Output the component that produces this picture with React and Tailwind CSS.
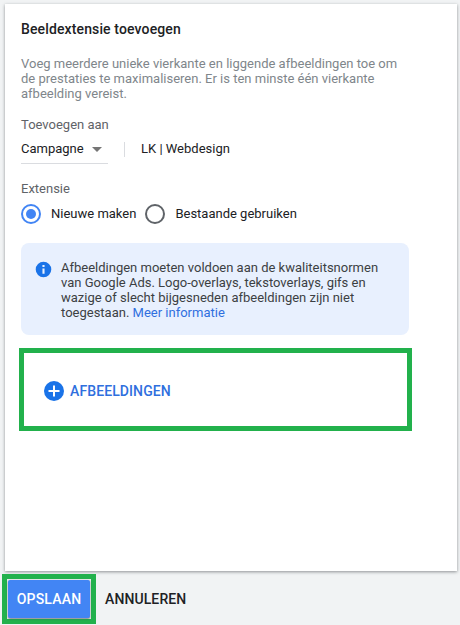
import React from "react";

function Radio({ checked, label }) {
  return (
    <div className="flex items-center">
      <span className={`flex h-[20px] w-[20px] items-center justify-center rounded-full border-2 ${checked ? "border-[#4285f4]" : "border-[#5f6368]"}`}>
        {checked && <span className="h-[10px] w-[10px] rounded-full bg-[#4285f4]" />}
      </span>
      <span className="ml-[10px] text-[13px] leading-[20px] text-[#202124]">{label}</span>
    </div>
  );
}

export default function App() {
  return (
    <div className="flex h-[625px] w-[460px] flex-col overflow-hidden bg-[#f1f3f4] font-['Roboto',sans-serif]">
      {/* Card */}
      <div className="mt-[4px] ml-[5px] flex h-[567px] w-[452px] shrink-0 flex-col bg-white pt-[17px] pl-[16px] shadow-[0_1px_3px_rgba(60,64,67,0.55)]">
        <h1 className="text-[14px] leading-[16px] font-medium tracking-[0.13px] text-[#202124]">Beeldextensie toevoegen</h1>

        <p className="mt-[19px] w-[385px] text-[13px] leading-[15px] text-[#80868b]">
          Voeg meerdere unieke vierkante en liggende afbeeldingen toe om de prestaties te maximaliseren. Er is ten minste één vierkante afbeelding vereist.
        </p>

        <div className="mt-[16px] text-[13px] leading-[16px] text-[#5f6368]">Toevoegen aan</div>
        <div className="mt-[7px] flex items-start">
          <div className="flex h-[24px] w-[87px] items-start border-b border-[#dadce0]">
            <span className="text-[13px] leading-[18px] text-[#202124]">Campagne</span>
            <span className="mt-[7px] ml-[8px] h-0 w-0 border-x-[5px] border-t-[5px] border-x-transparent border-t-[#757575]" />
          </div>
          <div className="mt-[2px] ml-[16px] h-[15px] w-px bg-[#dadce0]" />
          <span className="ml-[16px] text-[13px] leading-[18px] text-[#202124]">LK | Webdesign</span>
        </div>

        <div className="mt-[17px] text-[13px] leading-[16px] text-[#5f6368]">Extensie</div>
        <div className="mt-[7px] flex items-center gap-[9px]">
          <Radio checked label="Nieuwe maken" />
          <Radio label="Bestaande gebruiken" />
        </div>

        {/* Info */}
        <div className="mt-[19px] flex h-[92px] w-[388px] rounded-[8px] bg-[#e8f0fe] pt-[17px] pl-[14px]">
          <svg viewBox="0 0 24 24" className="mt-[1px] h-[17px] w-[17px] shrink-0 fill-[#1a73e8]">
            <path d="M12 1a11 11 0 1 0 0 22 11 11 0 0 0 0-22zm1.5 17h-3v-7.5h3V18zm0-9.5h-3V5.5h3v3z" />
          </svg>
          <p className="ml-[9px] w-[340px] text-[13px] leading-[15px] text-[#3c4043]">
            Afbeeldingen moeten voldoen aan de kwaliteitsnormen van Google Ads. Logo-overlays, tekstoverlays, gifs en wazige of slecht bijgesneden afbeeldingen zijn niet toegestaan. <span className="text-[#2f6fde]">Meer informatie</span>
          </p>
        </div>

        {/* Highlighted add button */}
        <div className="mt-[13px] -ml-[2px] flex h-[83px] w-[393px] items-center border-[5px] border-[#22b14c] pt-[2px] pl-[20px]">
          <span className="flex h-[20px] w-[20px] items-center justify-center rounded-full bg-[#1a73e8]">
            <svg viewBox="0 0 20 20" className="h-[20px] w-[20px] fill-white">
              <path d="M9 4.5h2V9h4.5v2H11v4.5H9V11H4.5V9H9z" />
            </svg>
          </span>
          <span className="ml-[6px] text-[14px] leading-[16px] font-medium tracking-[0.1px] text-[#2f6fde]">AFBEELDINGEN</span>
        </div>
      </div>

      {/* Footer */}
      <div className="mt-[3px] ml-[2px] flex items-center">
        <div className="h-[50px] w-[94px] border-[5px] border-[#22b14c] bg-[#e8eaed] p-px">
          <button className="h-[38px] w-[82px] rounded-[2px] bg-[#4285f4] text-[14px] font-medium tracking-[0.2px] text-white shadow-[0_1px_2px_rgba(60,64,67,0.6)]">OPSLAAN</button>
        </div>
        <span className="ml-[9px] text-[14px] font-medium tracking-[0.1px] text-[#202124]">ANNULEREN</span>
      </div>
    </div>
  );
}
